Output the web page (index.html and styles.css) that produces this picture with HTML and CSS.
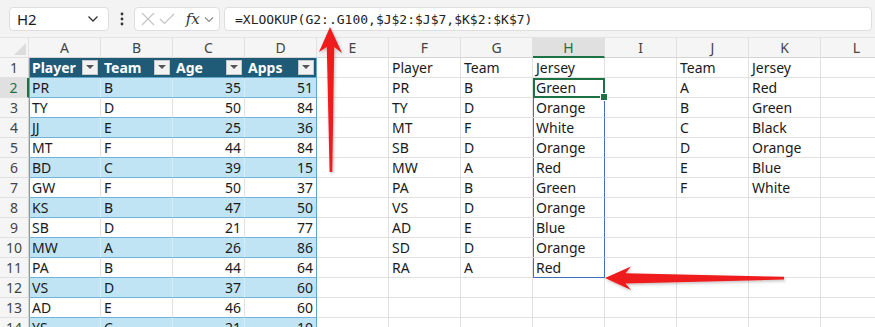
FILE: index.html
```html
<!DOCTYPE html>
<html lang="en">
<head>
    <meta charset="UTF-8">
    <title>XLOOKUP spill</title>
    <link rel="stylesheet" href="styles.css">
</head>
<body>
    <div class="toolbar">
        <div class="namebox">
            <span>H2</span>
            <svg class="chev" width="12" height="8" viewBox="0 0 12 8"><path d="M1.5 1.5 L6 6 L10.5 1.5" fill="none" stroke="#333" stroke-width="1.3"/></svg>
        </div>
        <div class="kebab">
            <svg width="4" height="16" viewBox="0 0 4 16"><circle cx="2" cy="3" r="1.4" fill="#333"/><circle cx="2" cy="8" r="1.4" fill="#333"/><circle cx="2" cy="13" r="1.4" fill="#333"/></svg>
        </div>
        <div class="fxbox">
            <svg width="14" height="14" viewBox="0 0 14 14"><path d="M1 1 L13 13 M13 1 L1 13" stroke="#c4c4c4" stroke-width="1.2"/></svg>
            <svg width="16" height="12" viewBox="0 0 16 12"><path d="M1 6 L5.5 10.5 L15 1" fill="none" stroke="#c4c4c4" stroke-width="1.2"/></svg>
            <span class="fx">fx</span>
            <svg width="10" height="7" viewBox="0 0 10 7"><path d="M1 1.5 L5 5.5 L9 1.5" fill="none" stroke="#888" stroke-width="1.1"/></svg>
        </div>
        <div class="formula">=XLOOKUP(G2:.G100,$J$2:$J$7,$K$2:$K$7)</div>
    </div>

    <div class="sheet" id="sheet"></div>

    <svg class="arrows" width="875" height="327" viewBox="0 0 875 327">
        <defs>
            <filter id="shadow" x="-20%" y="-20%" width="140%" height="140%">
                <feDropShadow dx="1" dy="1.5" stdDeviation="1.5" flood-color="#000" flood-opacity="0.25"/>
            </filter>
        </defs>
        <polygon filter="url(#shadow)" fill="#ee1b1b"
            points="330,27 342,53 334.2,47 332.3,172 329.6,172 326.8,47 319,52"/>
        <polygon filter="url(#shadow)" fill="#ee1b1b"
            points="605,278 631,266.5 625.5,273.3 784,276.8 784,279.6 625.5,283.6 631,290"/>
    </svg>

    <script>
        const cols = ['A','B','C','D','E','F','G','H','I','J','K','L'];

        const players = [
            ['Player','Team','Age','Apps'],
            ['PR','B',35,51], ['TY','D',50,84], ['JJ','E',25,36], ['MT','F',44,84],
            ['BD','C',39,15], ['GW','F',50,37], ['KS','B',47,50], ['SB','D',21,77],
            ['MW','A',26,86], ['PA','B',44,64], ['VS','D',37,60], ['AD','E',46,60],
            ['YS','C',21,10]
        ];
        const lookup = [
            ['Player','Team','Jersey'],
            ['PR','B','Green'], ['TY','D','Orange'], ['MT','F','White'], ['SB','D','Orange'],
            ['MW','A','Red'], ['PA','B','Green'], ['VS','D','Orange'], ['AD','E','Blue'],
            ['SD','D','Orange'], ['RA','A','Red']
        ];
        const jerseys = [
            ['Team','Jersey'],
            ['A','Red'], ['B','Green'], ['C','Black'], ['D','Orange'], ['E','Blue'], ['F','White']
        ];

        const sheet = document.getElementById('sheet');

        function cell(cls, text) {
            let div = document.createElement('div');
            div.className = cls;
            if (text !== undefined && text !== '') div.textContent = text;
            sheet.appendChild(div);
            return div;
        }

        // column header row
        cell('corner');
        cols.forEach(c => cell(c === 'H' ? 'colhead sel' : 'colhead', c));

        for (let r = 1; r <= 14; r++) {
            cell(r === 2 ? 'rowhead sel' : 'rowhead', r);
            cols.forEach((c, ci) => {
                let cls = 'cell';
                let text = '';

                if (ci < 4) {
                    let row = players[r - 1];
                    text = row[ci];
                    if (r === 1) {
                        cls += ' th';
                    } else {
                        cls += r % 2 === 0 ? ' band' : ' plain';
                        if (ci >= 2) cls += ' num';
                    }
                    if (ci === 0) cls += ' tleft';
                    if (ci === 3) cls += ' tright';
                }

                if (ci >= 5 && ci <= 7 && r <= lookup.length) {
                    text = lookup[r - 1][ci - 5];
                }
                if (ci === 7 && r >= 2 && r <= 11) {
                    cls += ' spill';
                    if (r === 2) cls += ' active';
                    if (r === 11) cls += ' spill-end';
                }
                if (ci >= 9 && ci <= 10 && r <= jerseys.length) {
                    text = jerseys[r - 1][ci - 9];
                }

                let div = cell(cls, text);
                if (r === 1 && ci < 4) {
                    let btn = document.createElement('span');
                    btn.className = 'filter';
                    div.appendChild(btn);
                }
            });
        }
    </script>
</body>
</html>
```

FILE: styles.css
```css
body {
    margin: 0;
    width: 875px;
    height: 327px;
    overflow: hidden;
    background-color: #ffffff;
    font-family: "Noto Sans", "Liberation Sans", sans-serif;
    color: #1a1a1a;
    position: relative;
}

.toolbar {
    height: 38px;
    box-sizing: border-box;
    background-color: #f3f3f3;
    display: flex;
    align-items: flex-start;
    padding: 7px 3px 0 9px;
    gap: 4px;
    border-bottom: 1px solid #e4e4e4;
}

.namebox, .fxbox, .formula {
    height: 24px;
    box-sizing: border-box;
    background-color: #ffffff;
    border: 1px solid #dedede;
    border-radius: 4px;
    display: flex;
    align-items: center;
}

.namebox {
    width: 100px;
    padding: 0 9px 0 7px;
    justify-content: space-between;
    font-size: 15px;
}

.kebab {
    width: 17px;
    height: 24px;
    display: flex;
    align-items: center;
    justify-content: center;
}

.fxbox {
    width: 86px;
    padding: 0 5px 0 6px;
    justify-content: space-between;
}

.fx {
    font-family: "DejaVu Serif", "Liberation Serif", serif;
    font-style: italic;
    font-size: 15px;
    color: #333;
    margin-left: 6px;
}

.formula {
    flex: 1;
    padding-left: 10px;
    font-family: "DejaVu Sans Mono", "Liberation Mono", monospace;
    font-size: 13px;
    color: #222;
}

.sheet {
    display: grid;
    grid-template-columns: 29px repeat(12, 72px);
    grid-auto-rows: 20px;
    font-size: 14px;
    line-height: 20px;
}

.sheet > div {
    box-sizing: border-box;
    border-right: 1px solid #e1e1e1;
    border-bottom: 1px solid #e1e1e1;
    white-space: nowrap;
    overflow: hidden;
    position: relative;
}

.corner {
    background-color: #f5f5f5;
}

.corner::after {
    content: "";
    position: absolute;
    right: 2px;
    bottom: 2px;
    border-left: 12px solid transparent;
    border-bottom: 12px solid #dcdcdc;
}

.colhead {
    background-color: #f5f5f5;
    text-align: center;
    color: #444;
    border-bottom-color: #d4d4d4 !important;
}

.colhead.sel {
    background-color: #e0e0e0;
    color: #1e7145;
    border-bottom: 2px solid #1e7145 !important;
}

.rowhead {
    background-color: #f5f5f5;
    text-align: center;
    color: #444;
    border-right-color: #d4d4d4 !important;
}

.rowhead.sel {
    background-color: #e0e0e0;
    color: #1e7145;
    border-right: 2px solid #1e7145 !important;
}

.cell {
    padding: 0 3px;
}

.th {
    background-color: #1f5b77;
    color: #ffffff;
    font-weight: bold;
    border-right-color: #1f5b77 !important;
    border-bottom-color: #5ea7cd !important;
}

.band {
    background-color: #c1e4f5;
    border-bottom-color: #6fb3d8 !important;
    border-right-color: #d3ecf7 !important;
}

.plain {
    border-bottom-color: #6fb3d8 !important;
}

.num {
    text-align: right;
}

.tleft {
    box-shadow: inset 1px 0 0 #5ea7cd;
}

.tright {
    border-right-color: #5ea7cd !important;
}

.filter {
    position: absolute;
    right: 2px;
    top: 2px;
    width: 16px;
    height: 15px;
    box-sizing: border-box;
    background-color: #f2f2f2;
    border: 1px solid #c8c8c8;
}

.filter::after {
    content: "";
    position: absolute;
    left: 3px;
    top: 4px;
    border-left: 4px solid transparent;
    border-right: 4px solid transparent;
    border-top: 4px solid #555;
}

.spill {
    box-shadow: inset 1px 0 0 #3f6fb8;
    border-right-color: #3f6fb8 !important;
}

.spill-end {
    border-bottom-color: #3f6fb8 !important;
}

.active {
    outline: 2px solid #1e7145;
    outline-offset: -2px;
    overflow: visible !important;
    z-index: 2;
}

.active::after {
    content: "";
    position: absolute;
    right: -4px;
    bottom: -4px;
    width: 6px;
    height: 6px;
    background-color: #1e7145;
    border: 1px solid #ffffff;
}

.arrows {
    position: absolute;
    left: 0;
    top: 0;
    pointer-events: none;
    z-index: 5;
}
```
